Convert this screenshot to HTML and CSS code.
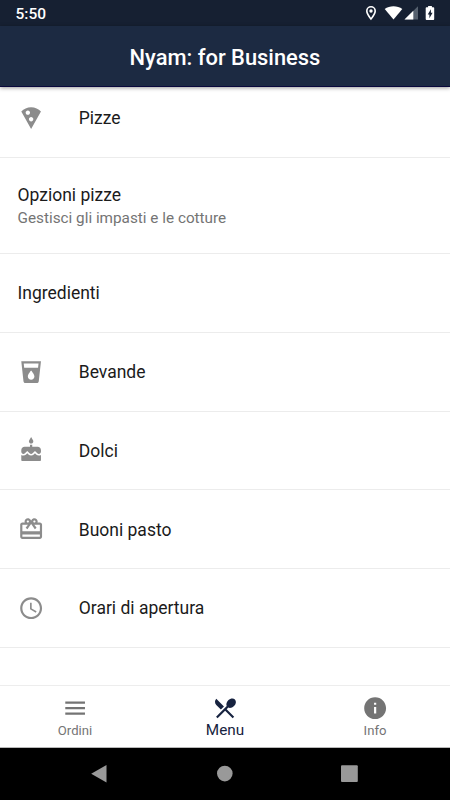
FILE: index.html
```html
<!DOCTYPE html>
<html lang="it">
<head>
<meta charset="utf-8">
<title>Nyam: for Business</title>
<link rel="stylesheet" href="styles.css">
</head>
<body>
<div class="screen">
  <div class="status">
    <span class="time">5:50</span>
    <svg class="status-icons" viewBox="0 0 80 26" width="80" height="26">
      <path fill="#fff" fill-rule="evenodd" d="M11 6a5 5 0 0 0-5 5c0 3.700 5 9.300 5 9.300s5-5.600 5-9.300a5 5 0 0 0-5-5zm0 1.600a3.400 3.400 0 0 1 3.400 3.400c0 1.900-1.900 4.800-3.400 6.700-1.500-1.900-3.400-4.800-3.400-6.700A3.400 3.400 0 0 1 11 7.600z"/>
      <circle cx="11" cy="11" r="1.700" fill="#fff"/>
      <path fill="#fff" d="M24.700 8.900C29.500 5.300 37.500 5.300 42.300 8.900L33.500 19.500z"/>
      <path fill="#56616f" d="M58 6.200v13.300H44.500z"/>
      <path fill="#fff" d="M53.300 10.800v8.700h-8.800z"/>
      <path fill="#fff" fill-rule="evenodd" d="M71.900 6v1.300h1.500c.5 0 .8.300.8.800v11c0 .5-.3.900-.8.900h-6.800c-.5 0-.9-.4-.9-.9v-11c0-.5.400-.8.900-.8h1.500V6zM70.900 9.300l-3.200 5.200h1.700v3.700l3.200-5.400h-1.700z"/>
    </svg>
  </div>
  <header class="appbar"><h1>Nyam: for Business</h1></header>
  <main class="list">
    <div class="row">
      <svg class="icon" viewBox="0 0 24 24"><path d="M12 2C8.430 2 5.230 3.540 3.010 6L12 22l8.990-16C18.780 3.550 15.570 2 12 2zM7 7c0-1.100.9-2 2-2s2 .9 2 2-.9 2-2 2-2-.9-2-2zm5 8c-1.100 0-2-.9-2-2s.9-2 2-2 2 .9 2 2-.89 2-2 2z"/></svg>
      <span class="label">Pizze</span>
    </div>
    <div class="row row-tall">
      <div class="stack"><span class="label">Opzioni pizze</span><span class="sub">Gestisci gli impasti e le cotture</span></div>
    </div>
    <div class="row"><span class="label">Ingredienti</span></div>
    <div class="row">
      <svg class="icon" viewBox="0 0 24 24"><path d="M3 2l2.010 18.230C5.130 21.230 5.970 22 7 22h10c1.030 0 1.870-.77 1.990-1.770L21 2H3zm9 17c-1.660 0-3-1.340-3-3 0-2 3-5.400 3-5.400s3 3.400 3 5.400c0 1.660-1.340 3-3 3zm6.330-11H5.670l-.44-4h13.550l-.45 4z"/></svg>
      <span class="label">Bevande</span>
    </div>
    <div class="row">
      <svg class="icon" viewBox="0 0 24 24"><path d="M12 6c1.110 0 2-.9 2-2 0-.38-.1-.73-.29-1.030L12 0l-1.710 2.970c-.19.3-.29.650-.29 1.030 0 1.100.9 2 2 2zm4.600 9.990l-1.070-1.070-1.080 1.070c-1.300 1.300-3.580 1.310-4.890 0l-1.070-1.070-1.090 1.070C6.750 16.640 5.880 17 4.960 17c-.73 0-1.400-.23-1.960-.61V21c0 .55.450 1 1 1h16c.55 0 1-.45 1-1v-4.610c-.56.380-1.230.610-1.960.610-.92 0-1.790-.36-2.440-1.010zM18 9h-5V7h-2v2H6c-1.660 0-3 1.340-3 3v1.540c0 1.080.88 1.960 1.960 1.960.52 0 1.020-.2 1.380-.57l2.140-2.130 2.130 2.130c.74.740 2.030.740 2.770 0l2.140-2.130 2.130 2.130c.37.370.86.570 1.380.570 1.080 0 1.960-.88 1.960-1.960V12C21 10.340 19.660 9 18 9z"/></svg>
      <span class="label">Dolci</span>
    </div>
    <div class="row">
      <svg class="icon" viewBox="0 0 24 24"><path d="M20 6h-2.180c.11-.31.180-.65.180-1 0-1.660-1.340-3-3-3-1.050 0-1.960.54-2.500 1.350l-.5.670-.5-.68C10.960 2.540 10.050 2 9 2 7.340 2 6 3.340 6 5c0 .35.070.690.180 1H4c-1.110 0-1.990.89-1.990 2L2 19c0 1.110.89 2 2 2h16c1.110 0 2-.89 2-2V8c0-1.110-.89-2-2-2zm-5-2c.55 0 1 .45 1 1s-.45 1-1 1-1-.45-1-1 .45-1 1-1zM9 4c.55 0 1 .45 1 1s-.45 1-1 1-1-.45-1-1 .45-1 1-1zm11 15H4v-2h16v2zm0-5H4V8h5.080L7 10.830 8.620 12 11 8.760l1-1.360 1 1.360L15.380 12 17 10.830 14.920 8H20v6z"/></svg>
      <span class="label">Buoni pasto</span>
    </div>
    <div class="row">
      <svg class="icon" viewBox="0 0 24 24"><path d="M11.990 2C6.470 2 2 6.480 2 12s4.470 10 9.990 10C17.520 22 22 17.520 22 12S17.520 2 11.990 2zM12 20c-4.420 0-8-3.580-8-8s3.580-8 8-8 8 3.580 8 8-3.580 8-8 8zM12.500 7H11v6l5.250 3.150.75-1.230-4.500-2.670z"/></svg>
      <span class="label">Orari di apertura</span>
    </div>
  </main>
  <nav class="tabs">
    <div class="tab">
      <svg class="tab-icon" viewBox="0 0 24 24"><path d="M3 18h18v-2H3v2zm0-5h18v-2H3v2zm0-7v2h18V6H3z"/></svg>
      <span class="tab-label">Ordini</span>
    </div>
    <div class="tab active">
      <svg class="tab-icon" viewBox="0 0 24 24"><path d="M8.100 13.340l2.830-2.830L3.910 3.500c-1.560 1.560-1.560 4.090 0 5.660l4.190 4.180zm6.780-1.810c1.530.710 3.680.210 5.270-1.380 1.910-1.910 2.280-4.650.81-6.120-1.460-1.460-4.200-1.100-6.120.81-1.590 1.590-2.090 3.740-1.380 5.270L3.700 19.870l1.410 1.410L12 14.410l6.880 6.880 1.410-1.410L13.410 13l1.470-1.470z"/></svg>
      <span class="tab-label">Menu</span>
    </div>
    <div class="tab">
      <svg class="tab-icon" viewBox="0 0 24 24"><path d="M12 2C6.480 2 2 6.480 2 12s4.480 10 10 10 10-4.480 10-10S17.520 2 12 2zm1 15h-2v-6h2v6zm0-8h-2V7h2v2z"/></svg>
      <span class="tab-label">Info</span>
    </div>
  </nav>
  <div class="sysnav">
    <svg viewBox="0 0 18 20" width="18" height="20"><path d="M15.500 1v17.500L.2 9.700z"/></svg>
    <svg viewBox="0 0 18 20" width="18" height="20"><circle cx="8.800" cy="9.600" r="7.800"/></svg>
    <svg viewBox="0 0 18 20" width="18" height="20"><rect x="0" y="1.200" width="16.800" height="16.800" rx="1"/></svg>
  </div>
</div>
</body>
</html>
```
FILE: styles.css
```css
body {
  margin: 0;
  font-family: Roboto, sans-serif;
  background: #fff;
}
.screen {
  width: 450px;
  height: 800px;
  display: flex;
  flex-direction: column;
  overflow: hidden;
}
.status {
  height: 26px;
  flex: none;
  display: flex;
  justify-content: space-between;
  background: #162032;
  padding: 0 10px 0 15.500px;
}
.time {
  color: #fff;
  font-size: 15.500px;
  font-weight: 500;
  line-height: 28px;
}
.appbar {
  height: 61px;
  flex: none;
  box-sizing: border-box;
  display: flex;
  align-items: center;
  justify-content: center;
  background: #1c2a42;
  border-bottom: 1px solid #09083c;
  box-shadow: 0 1px 4px rgba(0, 0, 0, 0.4);
  z-index: 1;
}
h1 {
  margin: 0;
  padding-top: 4px;
  color: #fff;
  font-size: 21.900px;
  font-weight: 500;
  line-height: 28px;
}
.list {
  flex: 1;
  min-height: 0;
  margin-top: -7.900px;
}
.row {
  height: 78.750px;
  box-sizing: border-box;
  display: flex;
  align-items: center;
  padding-left: 17.500px;
  border-bottom: 1px solid #ececec;
}
.row-tall {
  height: 96.250px;
}
.icon {
  width: 26.250px;
  height: 26.250px;
  margin-right: 35px;
  fill: #8c8c8c;
}
.label {
  color: #1b1b1b;
  font-size: 17.500px;
  line-height: 24px;
  padding-top: 1px;
}
.stack {
  display: flex;
  flex-direction: column;
  padding-top: 1px;
}
.sub {
  color: #747474;
  font-size: 15.300px;
  line-height: 22px;
}
.tabs {
  height: 63px;
  flex: none;
  box-sizing: border-box;
  display: flex;
  border-top: 1px solid #ededed;
  border-bottom: 1px solid #b8b8b8;
}
.tab {
  flex: 1;
  display: flex;
  flex-direction: column;
  align-items: center;
  padding-top: 9px;
  color: #747474;
}
.tab-icon {
  width: 26.250px;
  height: 26.250px;
  fill: currentColor;
}
.tab-label {
  font-size: 13.100px;
  line-height: 16px;
  margin-top: 2px;
}
.active {
  color: #172340;
}
.active .tab-label {
  font-size: 15.300px;
  margin-top: 1px;
}
.sysnav {
  height: 52px;
  flex: none;
  display: flex;
  align-items: center;
  justify-content: center;
  gap: 107px;
  background: #000;
}
.sysnav svg {
  fill: #999;
}
```
